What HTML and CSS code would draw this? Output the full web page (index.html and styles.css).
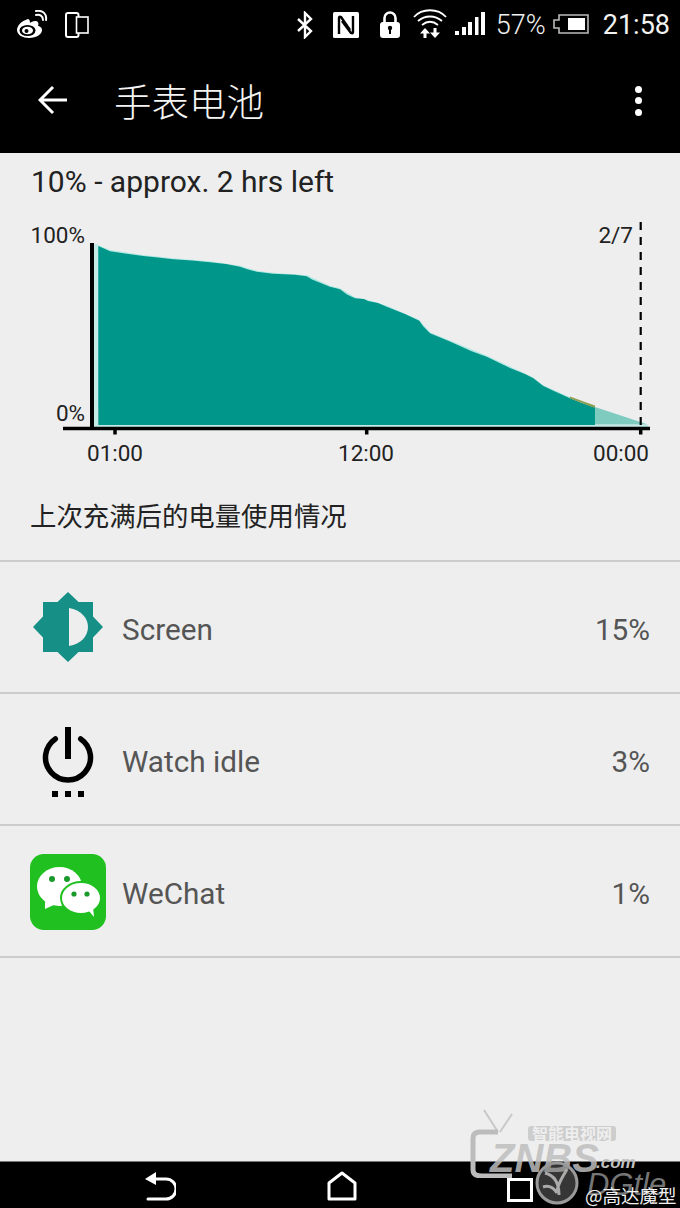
FILE: index.html
```html
<!DOCTYPE html>
<html lang="zh">
<head>
<meta charset="utf-8">
<title>手表电池</title>
<link rel="stylesheet" href="styles.css">
</head>
<body>
<div class="screen">
  <header class="status">
    <div class="status-left">
      <svg class="ico ico-weibo" viewBox="0 0 32 30" width="32" height="30"><path d="M12 9C5 11 1 16 1 20c0 5 6 8 12 8 8 0 13-4 13-8 0-3-3-4-4-4 1-3 0-5-3-5-2 0-4 1-5 2 0-3-1-4-2-4z" fill="#fff"/><ellipse cx="11.500" cy="20.500" rx="8" ry="5.500" fill="#000"/><ellipse cx="11.500" cy="20.500" rx="5.500" ry="3.800" fill="#fff"/><circle cx="10.500" cy="21" r="2" fill="#000"/><path d="M20 5c4-1 7 1 7 5M20 1c7-1 11 3 10 9" fill="none" stroke="#fff" stroke-width="2" stroke-linecap="round"/></svg>
      <svg class="ico ico-phones" viewBox="0 0 24 26" width="24" height="26"><rect x="1" y="1" width="12.500" height="24" rx="2" fill="none" stroke="#fff" stroke-width="2"/><rect x="11.500" y="5" width="11.500" height="16" fill="#000" stroke="#fff" stroke-width="1.600"/></svg>
    </div>
    <div class="status-right">
      <svg class="ico" viewBox="0 0 18 28" width="18" height="28"><path d="M2 8l13 12-6 6V2l6 6L2 20" fill="none" stroke="#fff" stroke-width="2.400"/></svg>
      <svg class="ico ico-nfc" viewBox="0 0 26 26" width="26" height="26"><rect width="26" height="26" rx="1.500" fill="#fff"/><path d="M6 22V6q0-2 2-1l9 13" fill="none" stroke="#000" stroke-width="2.400"/><path d="M20 4v16q0 2-2 1L9 9" fill="none" stroke="#000" stroke-width="2.400"/></svg>
      <svg class="ico ico-lock" viewBox="0 0 20 27" width="20" height="27"><path d="M4.500 12V7a5.500 5.500 0 0 1 11 0v5" fill="none" stroke="#fff" stroke-width="2.600"/><rect y="11" width="20" height="16" rx="3" fill="#fff"/><circle cx="10" cy="17" r="2.200" fill="#000"/><rect x="9" y="17" width="2" height="6" fill="#000"/></svg>
      <svg class="ico ico-wifi" viewBox="0 0 34 32" width="34" height="32"><path d="M1 10C9 1 25 1 33 10M5 14c7-6 17-6 24 0M9 18c5-4 11-4 16 0" fill="none" stroke="#fff" stroke-width="1.800"/><path d="M10.500 31v-4.500H7L12 21l5 5.500h-3.500V31zM20.500 21v4.500H17l5 5.500 5-5.500h-3.500V21z" fill="#fff"/></svg>
      <svg class="ico ico-signal" viewBox="0 0 30 24" width="30" height="24"><path d="M0 19h4v4H0zM7 15h4v8H7zM13 10h4v13h-4zM20 5h3.500v18H20zM26 0h4v23h-4z" fill="#fff"/></svg>
      <span class="pct">57%</span>
      <svg class="ico ico-batt" viewBox="0 0 36 20" width="36" height="20"><path d="M6 1h29v18H6v-5H1V6h5z" fill="none" stroke="#bbb" stroke-width="1.600"/><rect x="15" y="4" width="17" height="12" fill="#fff"/></svg>
      <span class="clock">21:58</span>
    </div>
  </header>

  <div class="appbar">
    <svg class="ico back" viewBox="0 0 30 30" width="30" height="30"><path d="M29 15H3M15 2L2 15l13 13" fill="none" stroke="#fff" stroke-width="3"/></svg>
    <h1 class="title">手表电池</h1>
    <div class="kebab"><i></i><i></i><i></i></div>
  </div>

  <main class="content">
    <p class="summary">10% - approx. 2 hrs left</p>
    <svg class="chart" viewBox="0 0 680 256" width="680" height="256">
      <g transform="translate(0 -215)">
        <path d="M94 244h4v181h497v2.500H94z" fill="#c4ebe6"/>
        <path d="M98 245L110 250 143 255 173 258.300 210 261.300 240 265.700 257 270.700 273 272.700 307 275.300 330 285.700 340 288.300 355 297.300 367 299.700 387 305.700 419 319.700 430 332.300 487 355.700 533 377.300 543 385 570 397.300 595 406.300V408H98z" fill="#b2e8e2"/>
        <path d="M98.300 246L104 248.500 110 251.300 125 253.500 143.300 256 158 257.500 173.300 259.300 192 260.500 210 262.300 226 264 240 266.700 248 269.500 256.700 271.700 273 273.700 295 274.800 306.700 276.300 312 279.500 322 283.500 330 286.700 340 289.300 347 294.500 355 298.300 364 299 368 301 378 303 386.700 306.700 405 314 419.300 320.700 423 326 430 333.300 450 341.500 471 351 486.700 356.700 510 368 525 374 533.300 378.300 543.300 386 555 391.500 570 398.300 582 403 595 407.300V425H98.300z" fill="#00968a"/>
        <path d="M570 396.500L585 402 595 405.500V408L570 398.500z" fill="#8f9f55"/>
        <path d="M595 407L648 424.500H595z" fill="#7fcbc0"/>
        <path d="M595 425h53v2.500h-53z" fill="#c4ebe6"/>
        <path d="M92 243v187" stroke="#000" stroke-width="4"/>
        <path d="M63 428.500h587" stroke="#000" stroke-width="3.500"/>
        <path d="M115 428v6.500M366.700 428v6.500M640.700 428v6.500" stroke="#000" stroke-width="3.500"/>
        <path d="M640.700 222V428" stroke="#000" stroke-width="2.200" stroke-dasharray="8 7"/>
        <text class="lbl" x="85" y="243" text-anchor="end">100%</text>
        <text class="lbl" x="85" y="421" text-anchor="end">0%</text>
        <text class="lbl" x="633" y="243" text-anchor="end">2/7</text>
        <text class="lbl" x="115" y="461" text-anchor="middle">01:00</text>
        <text class="lbl" x="366" y="461" text-anchor="middle">12:00</text>
        <text class="lbl" x="621" y="461" text-anchor="middle">00:00</text>
      </g>
    </svg>
    <p class="since">上次充满后的电量使用情况</p>
    <ul class="rows">
      <li class="row">
        <svg class="row-ico" viewBox="0 0 76 76" width="76" height="76"><path d="M38 2L48.500 12H63V26.500L73 37 63 47.500V62H48.500L38 72 27.500 62H13V47.500L3 37 13 26.500V12H27.500z" fill="#168f86"/><path d="M39 18c12 2 19 10 19 19s-7 17-19 19z" fill="#eee"/></svg>
        <span class="row-name">Screen</span><span class="row-val">15%</span>
      </li>
      <li class="row">
        <svg class="row-ico" viewBox="0 0 76 76" width="76" height="76"><path d="M25.300 16.900A22.500 22.500 0 1 0 50.700 16.900" fill="none" stroke="#000" stroke-width="5.500" stroke-linecap="round"/><path d="M38 5v32" stroke="#000" stroke-width="6"/><path d="M22 69h6v6h-6zM35 69h6v6h-6zM48 69h6v6h-6z" fill="#000"/></svg>
        <span class="row-name">Watch idle</span><span class="row-val">3%</span>
      </li>
      <li class="row">
        <svg class="row-ico" viewBox="0 0 76 76" width="76" height="76"><rect width="76" height="76" rx="14" fill="#1fc020"/><ellipse cx="29.500" cy="32.500" rx="22.500" ry="19.500" fill="#fff"/><path d="M15 46l0 9 11-5z" fill="#fff"/><ellipse cx="51" cy="44" rx="20" ry="16" fill="#fff" stroke="#1fc020" stroke-width="2"/><path d="M59 57l5 6-1-10z" fill="#fff"/><circle cx="22" cy="25" r="3" fill="#1a9a2a"/><circle cx="37" cy="25" r="3" fill="#1a9a2a"/><circle cx="44" cy="40" r="2.600" fill="#1a9a2a"/><circle cx="57" cy="40" r="2.600" fill="#1a9a2a"/></svg>
        <span class="row-name">WeChat</span><span class="row-val">1%</span>
      </li>
    </ul>
  </main>

  <nav class="navbar">
    <svg class="ico nav-back" viewBox="0 0 32 30" width="32" height="30"><path d="M7 8h15a8.500 8.500 0 0 1 0 20H4" fill="none" stroke="#fff" stroke-width="3" stroke-linecap="round"/><path d="M12 1v13L1 8z" fill="#fff"/></svg>
    <svg class="ico nav-home" viewBox="0 0 30 30" width="30" height="30"><path d="M15 2L28 12V28H2V12z" fill="none" stroke="#fff" stroke-width="3" stroke-linejoin="round"/></svg>
    <svg class="ico nav-rec" viewBox="0 0 26 24" width="26" height="24"><rect x="1.500" y="1.500" width="23" height="21" fill="none" stroke="#fff" stroke-width="3"/></svg>
  </nav>

  <div class="watermark">
    <svg class="wm-tv" viewBox="0 0 100 70" width="100" height="70"><path d="M14 2l14 22M42 6L30 24" stroke="#c8c8c8" stroke-width="2" fill="none"/><path d="M28 24H10Q3 24 3 30V62Q3 68 12 68H42" stroke="#bcbcbc" stroke-width="5" fill="none"/></svg>
    <span class="wm-tag">智能电视网</span>
    <span class="wm-znbs">ZNBS</span>
    <span class="wm-com">.com</span>
    <svg class="wm-bird" viewBox="0 0 44 44" width="44" height="44"><circle cx="22" cy="22" r="20" fill="rgba(120,120,120,.45)" stroke="#9a9a9a" stroke-width="3"/><path d="M10 12c8 2 14 8 14 22M32 8c-4 8-8 12-10 22M8 26c6-2 10 0 14 6" stroke="#aaa" stroke-width="3" fill="none"/></svg>
    <span class="wm-dgtle">DGtle</span>
    <span class="wm-user">@高达魔型</span>
  </div>
</div>
</body>
</html>
```

FILE: styles.css
```css
* { box-sizing: border-box; }
html, body { margin: 0; padding: 0; background: #eee; }
.screen {
  position: relative;
  width: 680px;
  height: 1208px;
  display: flex;
  flex-direction: column;
  overflow: hidden;
  font-family: Roboto, "Noto Sans CJK SC", sans-serif;
}
.ico { display: block; flex: none; }

.status {
  height: 50px;
  background: #000;
  color: #f2f2f2;
  display: flex;
  align-items: center;
  justify-content: space-between;
  padding: 0 10px 0 17px;
}
.status-left, .status-right { display: flex; align-items: center; }
.status-left { gap: 17px; }
.ico-weibo { width: 32px; margin-left: -1px; margin-top: -1px; }
.status-right { gap: 0; }
.ico-nfc { margin-left: 19px; margin-top: -1px; }
.ico-lock { margin-left: 21px; margin-top: -2px; }
.ico-wifi { margin-left: 13px; margin-top: -4px; }
.ico-signal { margin-left: 8px; margin-top: -2px; }
.pct { margin-left: 11px; font-size: 27px; line-height: 1; font-weight: 300; }
.ico-batt { margin-left: 7px; margin-top: -2px; }
.clock { margin-left: 14px; font-size: 27px; line-height: 1; }

.appbar {
  height: 103px;
  background: #000;
  display: flex;
  align-items: center;
  padding: 0 38px 0 38px;
}
.back { margin-top: -4px; }
.title {
  margin: -5px 0 0 46px;
  color: #f4f4f4;
  font-family: "Noto Sans CJK SC", sans-serif;
  font-size: 37.500px;
  font-weight: 300;
  line-height: 1.2;
  flex: 1;
}
.kebab { display: flex; flex-direction: column; gap: 4.500px; margin-top: -2px; }
.kebab i { display: block; width: 7px; height: 7px; border-radius: 50%; background: #fff; }

.content { flex: 1; background: #eee; display: flex; flex-direction: column; }
.summary {
  margin: 12px 0 0 31px;
  font-size: 30px;
  line-height: 34px;
  color: #222;
}
.chart { display: block; margin-top: 16px; }
.lbl { font-family: Roboto, sans-serif; font-size: 22.500px; fill: #222; }
.since {
  margin: 0 0 0 30px;
  font-family: "Noto Sans CJK SC", sans-serif;
  font-size: 26.400px;
  line-height: 34px;
  color: #222;
  padding-top: 27px;
}
.rows { list-style: none; margin: 28px 0 0; padding: 0; border-top: 2px solid #ccc; }
.row {
  height: 132px;
  display: flex;
  align-items: center;
  padding: 0 30px;
  border-bottom: 2px solid #ccc;
  color: #555;
  font-size: 29.700px;
}
.row-ico { flex: none; display: block; margin-top: 2px; }
.row-name { margin-left: 16px; flex: 1; margin-top: 4px; }
.row-val { margin-top: 4px; }

.navbar {
  height: 47px;
  background: #000;
  border-top: 1px solid #777;
  position: relative;
  display: flex;
  align-items: flex-start;
  padding: 9px 0 0 144px;
}
.nav-home { margin-left: 151px; }
.nav-rec { margin-left: 150px; margin-top: 7px; }

.watermark { position: absolute; left: 470px; top: 1100px; width: 210px; height: 108px; }
.wm-tv { position: absolute; left: 0; top: 8px; }
.wm-tag {
  position: absolute; left: 58px; top: 26px; padding: 0 4px;
  background: #cdcdcd; color: #eee; border-radius: 3px;
  font-family: "Noto Sans CJK SC", sans-serif; font-size: 16px; line-height: 15px; font-weight: 700;
}
.wm-znbs {
  position: absolute; left: 20px; top: 33px;
  color: rgba(190,190,190,.85); font-family: "Liberation Sans", sans-serif;
  font-size: 40px; line-height: 50px; font-weight: 700; font-style: italic;
}
.wm-com {
  position: absolute; left: 126px; top: 53px; color: #c0c0c0;
  font-family: "Liberation Sans", sans-serif; font-size: 17px; line-height: 20px; font-weight: 700; font-style: italic;
}
.wm-bird { position: absolute; left: 65px; top: 61px; }
.wm-dgtle {
  position: absolute; left: 117px; top: 63px; color: rgba(200,200,200,.6);
  font-family: "Liberation Sans", sans-serif; font-size: 31px; line-height: 44px; font-style: italic;
}
.wm-user {
  position: absolute; left: 115px; top: 83px; color: #f0f0f0;
  font-family: "Noto Sans CJK SC", sans-serif; font-size: 18.500px; line-height: 24px;
}
```
